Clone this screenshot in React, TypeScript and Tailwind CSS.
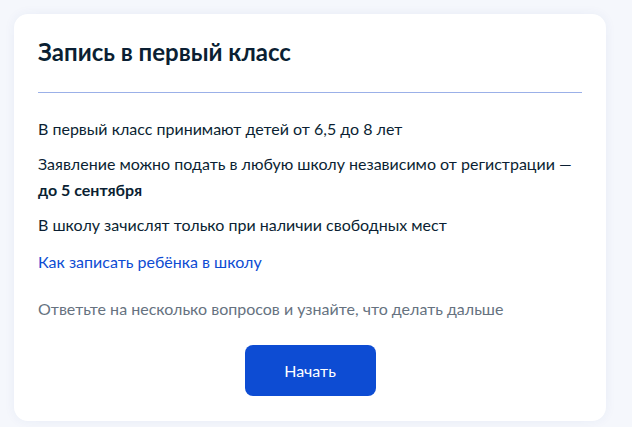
export default function App() {
  return (
    <main className="min-h-screen bg-[#f5f7fc] pt-[14px] pl-[14px] pr-[26px] font-['Lato','Noto_Sans',sans-serif] text-[#0b1f33]">
      <div className="bg-white rounded-[14px] shadow-[0_0_12px_rgba(30,60,150,0.06)] w-[592px] h-[407px] px-6 pt-[22px]">
        <h1 className="text-[24px] font-bold leading-[32px]">Запись в первый класс</h1>
        <div className="mt-[24px] h-px bg-[#9bb0e8]" />
        <div className="mt-[24px] text-[16px] leading-[24px]">
          <p>В первый класс принимают детей от 6,5 до 8 лет</p>
          <p className="mt-[10px] leading-[26px]">
            Заявление можно подать в любую школу независимо от регистрации —
            <br />
            <b>до 5 сентября</b>
          </p>
          <p className="mt-[10px]">В школу зачислят только при наличии свободных мест</p>
          <a href="#" className="block mt-[13px] text-[#0d4cd3]">
            Как записать ребёнка в школу
          </a>
          <p className="mt-[23px] text-[#66727f]">Ответьте на несколько вопросов и узнайте, что делать дальше</p>
        </div>
        <div className="mt-[24px] flex justify-center">
          <button className="w-[131px] h-[51px] rounded-[8px] bg-[#0d4cd3] text-white text-[16px]">Начать</button>
        </div>
      </div>
    </main>
  );
}
